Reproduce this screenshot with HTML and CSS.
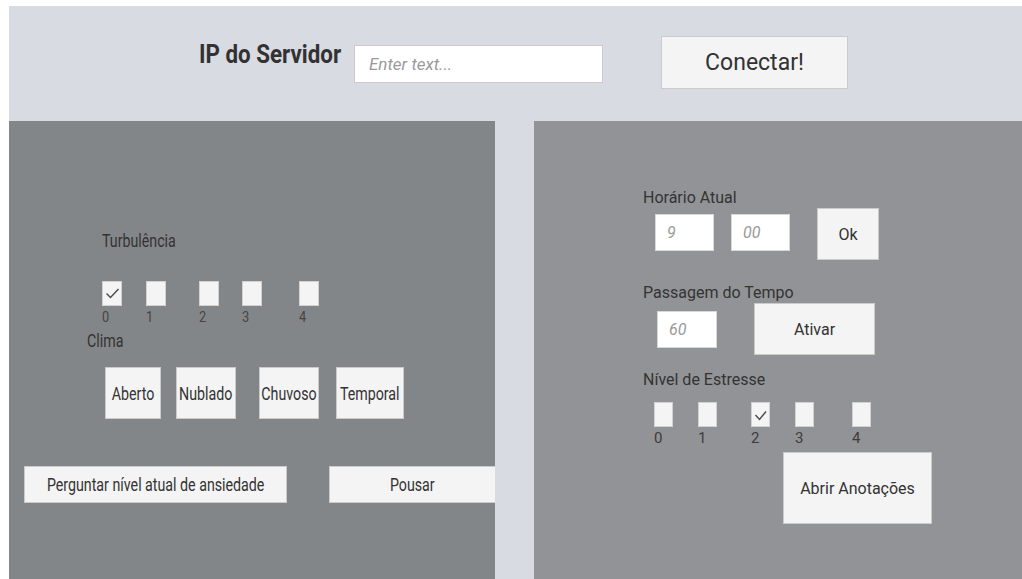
FILE: index.html
```html
<!DOCTYPE html>
<html lang="pt">
<head>
<meta charset="utf-8">
<title>Painel do Simulador</title>
<link rel="stylesheet" href="styles.css">
</head>
<body>
<div class="app">
  <header class="topbar">
    <span class="server-label"><span class="squeeze">IP do Servidor</span></span>
    <div class="field field-ip"><span class="placeholder">Enter text...</span></div>
    <button class="btn btn-connect">Conectar!</button>
  </header>

  <main class="panels">
    <section class="panel panel-flight">
      <div class="caption caption-turb"><span class="squeeze">Turbulência</span></div>
      <div class="levels levels-turb">
        <div class="level">
          <div class="box box-wide">
            <svg viewBox="0 0 20 25" width="20" height="25"><polyline points="4.5,12.5 8.5,16.5 16.5,8" fill="none" stroke="#4a4a4a" stroke-width="1.4"/></svg>
          </div>
          <span class="digit">0</span>
        </div>
        <div class="level"><div class="box box-wide"></div><span class="digit">1</span></div>
        <div class="level"><div class="box box-wide"></div><span class="digit">2</span></div>
        <div class="level"><div class="box box-wide"></div><span class="digit">3</span></div>
        <div class="level"><div class="box box-wide"></div><span class="digit">4</span></div>
      </div>
      <div class="caption caption-clima"><span class="squeeze">Clima</span></div>
      <div class="weather">
        <button class="btn btn-weather w-aberto"><span class="squeeze">Aberto</span></button>
        <button class="btn btn-weather w-nublado"><span class="squeeze">Nublado</span></button>
        <button class="btn btn-weather w-chuvoso"><span class="squeeze">Chuvoso</span></button>
        <button class="btn btn-weather w-temporal"><span class="squeeze">Temporal</span></button>
      </div>
      <div class="actions">
        <button class="btn btn-ask"><span class="squeeze">Perguntar nível atual de ansiedade</span></button>
        <button class="btn btn-land"><span class="squeeze">Pousar</span></button>
      </div>
    </section>

    <section class="panel panel-control">
      <div class="label label-time">Horário Atual</div>
      <div class="row row-time">
        <div class="field field-small field-hour"><span class="placeholder">9</span></div>
        <div class="field field-small field-min"><span class="placeholder">00</span></div>
        <button class="btn btn-ok">Ok</button>
      </div>
      <div class="label label-pass">Passagem do Tempo</div>
      <div class="row row-pass">
        <div class="field field-small field-rate"><span class="placeholder">60</span></div>
        <button class="btn btn-activate">Ativar</button>
      </div>
      <div class="label label-stress">Nível de Estresse</div>
      <div class="levels levels-stress">
        <div class="level"><div class="box"></div><span class="digit">0</span></div>
        <div class="level"><div class="box"></div><span class="digit">1</span></div>
        <div class="level">
          <div class="box">
            <svg viewBox="0 0 19 25" width="19" height="25"><polyline points="4.5,13 8.5,17.5 15,9.5" fill="none" stroke="#4a4a4a" stroke-width="1.4"/></svg>
          </div>
          <span class="digit">2</span>
        </div>
        <div class="level"><div class="box"></div><span class="digit">3</span></div>
        <div class="level"><div class="box"></div><span class="digit">4</span></div>
      </div>
      <button class="btn btn-notes">Abrir Anotações</button>
    </section>
  </main>
</div>
</body>
</html>
```

FILE: styles.css
```css
* {
  box-sizing: border-box;
}

html,
body {
  margin: 0;
  height: 100%;
  background: #ffffff;
  overflow: hidden;
}

body {
  font-family: Roboto, "Liberation Sans", Arial, sans-serif;
  color: #323232;
}

.app {
  margin: 6px 0 0 9px;
  height: 573px;
  background: #d8dbe1;
  display: flex;
  flex-direction: column;
}

/* condensed text, as the stretched labels of the app draw it */
.squeeze {
  display: inline-block;
  transform: scaleX(0.79);
}

/* top bar with server address */
.topbar {
  height: 115px;
  flex: none;
  display: flex;
  align-items: center;
  padding-left: 190px;
}

.server-label {
  align-self: flex-start;
  width: 142px;
  margin-top: 34px;
  font-size: 26px;
  line-height: 28px;
  font-weight: 700;
  color: #323232;
  white-space: nowrap;
}

.server-label .squeeze {
  transform: scaleX(0.86);
  transform-origin: left center;
}

.field {
  background: #ffffff;
  border: 1px solid #c9cbcf;
  display: flex;
  align-items: center;
}

.placeholder {
  font-style: italic;
  color: #9a9a9a;
}

.field-ip {
  width: 249px;
  height: 38px;
  margin-left: 13px;
  padding-left: 14px;
  font-size: 17px;
}

.btn {
  font-family: inherit;
  color: #323232;
  background: #f4f4f4;
  border: 1px solid #cbcbcb;
  padding: 0;
  margin: 0;
  display: flex;
  align-items: center;
  justify-content: center;
  white-space: nowrap;
}

.btn-connect {
  width: 187px;
  height: 53px;
  margin-left: 58px;
  margin-top: -2px;
  font-size: 23px;
}

/* lower panels */
.panels {
  flex: 1;
  display: flex;
  gap: 39px;
  min-height: 0;
}

.panel {
  display: flex;
  flex-direction: column;
  align-items: flex-start;
}

.panel-flight {
  width: 486px;
  background: #838689;
  padding-top: 110px;
}

.panel-control {
  flex: 1;
  background: #929397;
  padding-top: 67px;
}

.caption {
  font-size: 18px;
  line-height: 20px;
  color: #333333;
}

.caption .squeeze {
  transform-origin: left center;
}

.caption-turb {
  margin-left: 93px;
}

.caption-clima {
  margin-left: 78px;
  margin-top: 6px;
}

/* numbered level selectors */
.levels {
  display: grid;
  grid-template-columns: 44px 53px 43px 57px 20px;
}

.levels-turb {
  margin-left: 93px;
  margin-top: 30px;
}

.levels-stress {
  margin-left: 120px;
  margin-top: 13px;
  grid-template-columns: 44px 53px 44px 57px 19px;
}

.level {
  display: flex;
  flex-direction: column;
  align-items: flex-start;
}

.box {
  width: 19px;
  height: 25px;
  background: #f4f4f4;
  border: 1px solid #d2d2d2;
  position: relative;
}

.box-wide {
  width: 20px;
}

.box svg {
  position: absolute;
  left: -1px;
  top: -1px;
}

.digit {
  margin-top: 4px;
  font-size: 15px;
  line-height: 15px;
  color: #3c3c3c;
}

.levels-turb .digit {
  color: #444444;
  transform: scaleX(0.85);
  transform-origin: left center;
}

/* weather buttons */
.weather {
  display: grid;
  grid-template-columns: 71px 83px 77px 68px;
  margin-left: 96px;
  margin-top: 16px;
}

.btn-weather {
  height: 52px;
  font-size: 18px;
}

.w-aberto {
  width: 56px;
}

.w-nublado {
  width: 60px;
}

.w-chuvoso {
  width: 60px;
}

.w-temporal {
  width: 68px;
}

.actions {
  align-self: stretch;
  display: flex;
  justify-content: space-between;
  padding-left: 15px;
  margin-top: 47px;
}

.btn-ask {
  width: 263px;
  height: 37px;
  font-size: 18px;
}

.btn-land {
  width: 166px;
  height: 37px;
  font-size: 18px;
  border-right: none;
}

/* control panel */
.label {
  font-size: 16px;
  line-height: 19px;
  margin-left: 109px;
  color: #333333;
}

.label-pass {
  margin-top: 23px;
}

.label-stress {
  margin-top: 15px;
}

.row {
  display: flex;
  align-items: flex-start;
  margin-top: 1px;
}

.field-small {
  height: 37px;
  padding-left: 11px;
  font-size: 16px;
  border-color: #d8d8d8;
}

.field-hour {
  width: 59px;
  margin-left: 121px;
  margin-top: 6px;
}

.field-min {
  width: 59px;
  margin-left: 17px;
  margin-top: 6px;
}

.btn-ok {
  width: 62px;
  height: 52px;
  margin-left: 27px;
  font-size: 16px;
}

.field-rate {
  width: 60px;
  margin-left: 123px;
  margin-top: 8px;
}

.btn-activate {
  width: 121px;
  height: 52px;
  margin-left: 37px;
  font-size: 16px;
}

.btn-notes {
  width: 149px;
  height: 72px;
  margin-left: 249px;
  margin-top: 6px;
  font-size: 16px;
}
```
